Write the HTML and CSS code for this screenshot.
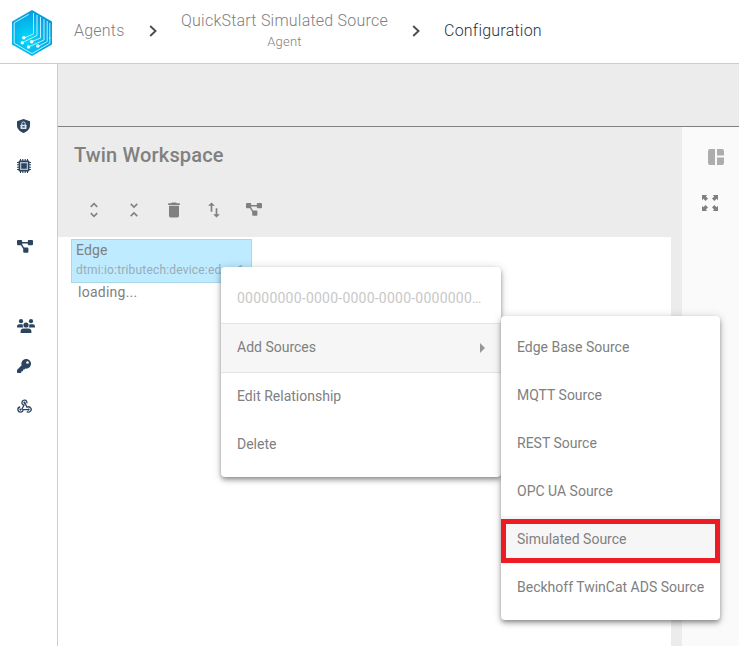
FILE: index.html
```
<!DOCTYPE html>
<html lang="en">
<head>
<meta charset="utf-8">
<title>Configuration</title>
<link rel="stylesheet" href="styles.css">
</head>
<body>
<svg class="defs" width="0" height="0" aria-hidden="true">
  <symbol id="diagram" viewBox="0 0 16 12.8"><path d="M1 0H4.2Q5.2 0 5.2 1V1.9H10.8V1Q10.8 0 11.8 0H15Q16 0 16 1V4.2Q16 5.2 15 5.2H11.8Q10.8 5.2 10.8 4.2V3.3H5.2V4.3L7 7.4H10.4Q11.4 7.4 11.4 8.4V11.6Q11.4 12.6 10.4 12.6H7.2Q6.2 12.6 6.2 11.6V8.9L4 5.2H1Q0 5.2 0 4.2V1Q0 0 1 0Z"/></symbol>
</svg>
<header class="topbar">
  <svg class="logo" width="40" height="46" viewBox="0 0 40 46">
    <defs><radialGradient id="lg" cx=".4" cy=".62" r=".65"><stop offset="0" stop-color="#00dcff"/><stop offset="1" stop-color="#0898dc"/></radialGradient></defs>
    <path d="M20 0 40 11.5V34.5L20 46 0 34.5V11.5Z" fill="url(#lg)"/>
    <g fill="none" stroke="#b8f0ff" stroke-width="1">
      <path d="M16.8 4.4 2.2 12.8V33.2L20 43.6 37.8 33.2V27"/>
      <path d="M21.5 3.2V24L11.8 28M25 5V25.4L10.5 32.6M28.5 7V28L19.7 31.6M32 9.2V30L16.5 37M35.2 11V31.6L26.8 36"/>
      <path d="M37.8 13V29"/>
    </g>
    <g fill="#effcff"><circle cx="11.8" cy="27.8" r="1.8"/><circle cx="10.3" cy="32.7" r="1.7"/><circle cx="19.7" cy="31.8" r="1.8"/><circle cx="16.5" cy="37" r="1.7"/><circle cx="25.8" cy="36" r="1.8"/></g>
  </svg>
  <nav class="crumbs">
    <a class="crumb">Agents</a>
    <svg class="chev" width="9" height="12" viewBox="0 0 9 12"><path d="M1.2 1 6.5 6 1.2 11"/></svg>
    <a class="crumb stacked"><span>QuickStart Simulated Source</span><small>Agent</small></a>
    <svg class="chev" width="9" height="12" viewBox="0 0 9 12"><path d="M1.2 1 6.5 6 1.2 11"/></svg>
    <a class="crumb current">Configuration</a>
  </nav>
</header>
<div class="shell">
  <aside class="side">
    <div class="slot"><svg width="14" height="14" viewBox="0 0 14 14"><path d="M6.5 0 13 2.2V6.5C13 10 10 12.8 6.5 14 3 12.8 0 10 0 6.5V2.2Z"/><rect x="3.5" y="5.8" width="6" height="4.2" rx=".4" fill="#dbe1e8"/><path d="M4.8 6V4.6a1.7 1.7 0 0 1 3.4 0V6" fill="none" stroke="#dbe1e8"/><rect x="5.3" y="7.2" width="2.4" height="1.3"/></svg></div>
    <div class="slot"><svg width="14" height="14" viewBox="0 0 14 14"><path d="M3.5 0V14M5.8 0V14M8.2 0V14M10.5 0V14M0 3.5H14M0 5.8H14M0 8.2H14M0 10.5H14" stroke="#2b4560" stroke-width="1.1"/><rect x="1.6" y="1.6" width="10.8" height="10.8" rx="1.2"/><rect x="3" y="3" width="8" height="8" fill="#b3bdc9"/><rect x="4.3" y="4.3" width="5.4" height="5.4"/></svg></div>
    <div class="slot"></div>
    <div class="slot"><svg width="16" height="13"><use href="#diagram"/></svg></div>
    <div class="slot"></div>
    <div class="slot"><svg width="18" height="14" viewBox="0 0 18 14"><circle cx="4" cy="2.2" r="2.1"/><circle cx="14" cy="2.2" r="2.1"/><path d="M0 8.6V7.4Q0 5.2 2.2 5.2H4.6Q5.4 5.2 5.8 5.6 5.4 7.4 6.4 8.6ZM18 8.6V7.4Q18 5.2 15.8 5.2H13.4Q12.6 5.2 12.2 5.6 12.6 7.4 11.6 8.6Z"/><circle cx="9" cy="6" r="2.6"/><path d="M3.6 14V12.4Q3.6 9.4 6.6 9.4H11.4Q14.4 9.4 14.4 12.4V14Z"/></svg></div>
    <div class="slot"><svg width="14" height="14" viewBox="0 0 512 512"><path d="M512 176.001C512 273.203 433.202 352 336 352c-11.22 0-22.19-1.062-32.827-3.069l-24.012 27.014A23.999 23.999 0 0 1 261.223 384H224v40c0 13.255-10.745 24-24 24h-40v40c0 13.255-10.745 24-24 24H24c-13.255 0-24-10.745-24-24v-78.059c0-6.365 2.529-12.47 7.029-16.971l161.802-161.802C163.108 213.814 160 195.271 160 176 160 78.798 238.797.001 335.999 0 433.488-.001 512 78.511 512 176.001zM336 128c0 26.51 21.49 48 48 48s48-21.49 48-48-21.49-48-48-48-48 21.49-48 48z"/></svg></div>
    <div class="slot"><svg width="15" height="14" viewBox="0 0 15 14"><g fill="none" stroke="#2b4560" stroke-width="1.3"><path d="M4.8 10.5 7 6.1A2.5 2.5 0 1 1 9.8 4.4"/><path d="M7.5 3.6 10.1 8.3A2.6 2.6 0 1 1 9.8 12.4"/><path d="M11.6 10.6H6.1A2.6 2.6 0 1 1 3.2 8"/></g><circle cx="7.4" cy="3.6" r="1.1"/><circle cx="3.5" cy="10.6" r="1.1"/><circle cx="11.6" cy="10.6" r="1.1"/></svg></div>
  </aside>
  <main class="main">
    <div class="band"></div>
    <div class="row">
      <section class="workspace">
        <div class="tools-head">
          <h1>Twin Workspace</h1>
          <div class="tools">
            <svg viewBox="0 0 24 24"><path d="M12 5.83L15.17 9l1.41-1.41L12 3 7.41 7.59 8.83 9 12 5.83zm0 12.34L8.83 15l-1.41 1.41L12 21l4.59-4.59L15.17 15 12 18.17z"/></svg>
            <svg viewBox="0 0 24 24"><path d="M7.41 18.59L8.83 20 12 16.83 15.17 20l1.41-1.41L12 14l-4.59 4.59zm9.18-13.18L15.17 4 12 7.17 8.83 4 7.41 5.41 12 10l4.59-4.59z"/></svg>
            <svg viewBox="0 0 24 24"><path d="M6 19c0 1.1.9 2 2 2h8c1.1 0 2-.9 2-2V7H6v12zM19 4h-3.5l-1-1h-5l-1 1H5v2h14V4z"/></svg>
            <svg viewBox="0 0 24 24"><path d="M9 3L5 6.99h3V14h2V6.99h3L9 3zm7 14.01V10h-2v7.01h-3L15 21l4-3.99h-3z"/></svg>
            <svg class="diagram small"><use href="#diagram"/></svg>
          </div>
        </div>
        <div class="tree">
          <div class="node"><div class="name">Edge</div><div class="dtmi">dtmi:io:tributech:device:edge;1</div></div>
          <div class="loading">loading...</div>
        </div>
      </section>
      <aside class="rail">
        <svg class="layout" width="16" height="16" viewBox="0 0 16 16"><path d="M2 0H7V16H2Q0 16 0 14V2Q0 0 2 0ZM9 0H14Q16 0 16 2V6.5H9ZM9 8.5H16V14Q16 16 14 16H9Z"/></svg>
        <svg class="expand" width="16" height="16" viewBox="0 0 16 16"><path d="M0 0H5.2L3.8 1.4 6 3.6 3.6 6 1.4 3.8 0 5.2ZM16 0V5.2L14.6 3.8 12.4 6 10 3.6 12.2 1.4 10.8 0ZM0 16V10.8L1.4 12.2 3.6 10 6 12.4 3.8 14.6 5.2 16ZM16 16H10.8L12.2 14.6 10 12.4 12.4 10 14.6 12.2 16 10.8Z"/></svg>
      </aside>
    </div>
  </main>
</div>
<div class="menu context">
  <div class="item disabled">00000000-0000-0000-0000-0000000…</div>
  <div class="item open"><span>Add Sources</span><i class="arrow"></i></div>
  <div class="item">Edit Relationship</div>
  <div class="item">Delete</div>
</div>
<div class="menu sources">
  <div class="item">Edge Base Source</div>
  <div class="item">MQTT Source</div>
  <div class="item">REST Source</div>
  <div class="item">OPC UA Source</div>
  <div class="item hover">Simulated Source</div>
  <div class="item">Beckhoff TwinCat ADS Source</div>
  <div class="highlight"></div>
</div>
</body>
</html>
```
FILE: styles.css
```
* { box-sizing: border-box; }
body {
  margin: 0;
  width: 739px;
  height: 646px;
  overflow: hidden;
  display: flex;
  flex-direction: column;
  position: relative;
  background: #fff;
  color: #808080;
  font: 400 14px/20px Roboto, "Liberation Sans", sans-serif;
}
svg { display: block; flex: none; }
.defs { position: absolute; }

.topbar { height: 64px; flex: none; display: flex; border-bottom: 1px solid #ccc; padding-left: 12px; }
.logo { margin-top: 10px; }
.crumbs { display: flex; align-items: center; height: 62px; margin-left: 22px; font-weight: 300; font-size: 16px; letter-spacing: .23px; }
.crumb { color: #808080; white-space: nowrap; }
.crumb.current { color: #263440; margin-left: 23px; }
.stacked { display: flex; flex-direction: column; align-items: center; margin: 1px 24px 0 23px; }
.stacked small { font-size: 13px; line-height: 22px; }
.crumbs .chev { fill: none; stroke: #4c4c55; stroke-width: 1.9; }
.crumb:first-child { width: 75px; }

.shell { flex: 1; display: flex; }
.side { width: 58px; flex: none; border-right: 1px solid #ccc; padding: 42px 0 0 17px; fill: #2b4560; }
.slot { height: 40px; display: flex; align-items: center; }
.diagram { margin-bottom: 1px; }
.main { flex: 1; display: flex; flex-direction: column; background: #ececec; }
.band { height: 63px; border-bottom: 1px solid #808080; }
.row { flex: 1; display: flex; gap: 11px; }
.workspace { width: 613px; display: flex; flex-direction: column; }
.tools-head { height: 110px; padding: 18px 16px 0; }
h1 { margin: 0; font-size: 20px; line-height: 20px; font-weight: 500; letter-spacing: .17px; }
.tools { display: flex; align-items: center; gap: 20px; height: 20px; margin: 35px 0 0 10px; }
.tools svg { width: 20px; height: 20px; fill: #808080; }
.tools .small { width: 16px; height: 13px; margin-left: 2px; }
.tree { flex: 1; background: #fff; padding: 2px 13px; }
.node { width: 181px; height: 44px; background: #beebff; border: 1px solid #a9d8eb; padding: 0 4px; white-space: nowrap; overflow: hidden; letter-spacing: .16px; }
.dtmi { font-size: 12px; color: #9aabb5; letter-spacing: .18px; }
.loading { padding: 0 7px; line-height: 18px; letter-spacing: .25px; }
.rail { flex: 1; background: #fafafa; padding: 22px 0 0 20px; fill: #808080; }
.layout { fill: #adadad; margin-left: 6px; }
.expand { margin-top: 30px; }

.menu { position: absolute; background: #fff; border-radius: 4px; padding: 8px 0; box-shadow: 0 2px 4px -1px rgba(0,0,0,.3), 0 4px 5px rgba(0,0,0,.17), 0 1px 10px rgba(0,0,0,.18); }
.context { left: 221px; top: 267px; width: 280px; }
.sources { left: 501px; top: 316px; width: 219px; }
.item { height: 48px; line-height: 46px; padding: 0 16px; white-space: nowrap; }
.disabled { color: #c8c8c8; letter-spacing: .23px; }
.open { height: 50px; background: #f6f6f6; border: solid #e4e4e4; border-width: 1px 0; display: flex; justify-content: space-between; }
.arrow { width: 0; height: 0; border: 5px solid transparent; border-left-color: #979797; border-right: 0; margin-top: 19px; }
.hover { background: #f6f6f6; }
.highlight { position: absolute; left: 0; top: 203px; width: 219px; height: 44px; border: 5px solid #ed1c24; }
```
